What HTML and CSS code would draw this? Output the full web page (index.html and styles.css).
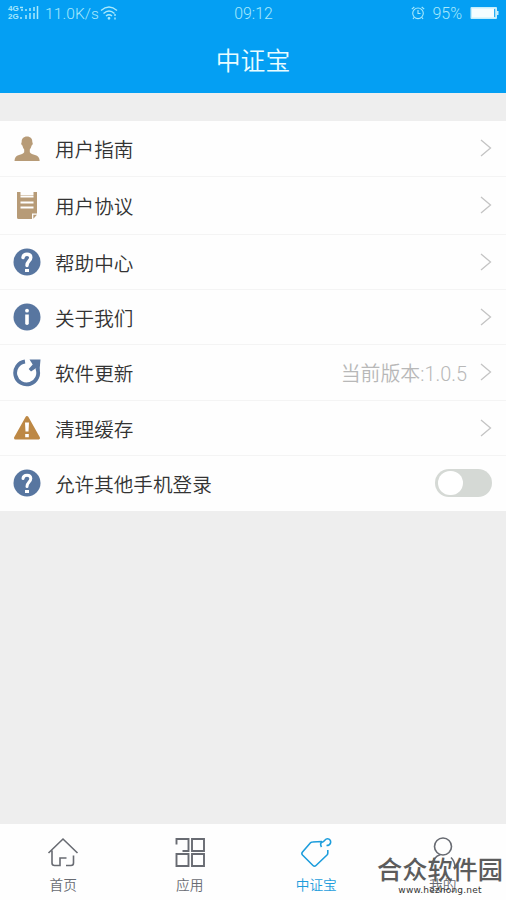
FILE: index.html
```html
<!DOCTYPE html>
<html lang="zh-CN">
<head>
<meta charset="utf-8">
<title>中证宝</title>
<link rel="stylesheet" href="styles.css">
</head>
<body>
<div class="app">
  <header class="header">
    <div class="status">
      <div class="status-left">
        <div class="network"><span>4G</span><span>2G</span></div>
        <svg class="signal" width="19" height="14" viewBox="0 0 19 14" fill="none" stroke="currentColor" stroke-width="1.500"><path d="M0 1.500h3M1 4h2M0 12h2M6 9v4M10 7v6M14 7v6M17.500 0v13M6 3v2M10 2v3M14 1v4"/></svg>
        <span class="speed">11.0K/s</span>
        <svg class="wifi" width="18" height="14" viewBox="0 0 18 14" fill="none" stroke="currentColor" stroke-width="1.400"><path d="M1 4.500Q9-2.500 17 4.500M3.500 7.500Q9 2.500 14.500 7.500M6 10Q9 7.500 12 10"/><circle cx="9" cy="12.300" r=".7" fill="currentColor"/><path d="M15 8v2M15 11.500v2"/></svg>
      </div>
      <span class="clock">09:12</span>
      <div class="status-right">
        <svg class="alarm" width="14" height="14" viewBox="0 0 14 14" fill="none" stroke="currentColor" stroke-width="1.100"><circle cx="7" cy="7.300" r="5.300"/><path d="M7 4v3.500h2.500M.8 3.200L3.300 1M13.200 3.200L10.700 1M3 11.500l-1 1.500M11 11.500l1 1.500"/></svg>
        <span class="percent">95%</span>
        <svg width="29" height="14" viewBox="0 0 29 14"><rect x=".5" y="1" width="26.500" height="12" rx="1" fill="#c5eefb"/><rect x="2" y="2.500" width="22" height="9" fill="#f5fdff"/><path d="M24.700 3v8" stroke="#069ff2"/><path d="M27 5h1.500v4H27z" fill="#c5eefb"/></svg>
      </div>
    </div>
    <h1 class="title">中证宝</h1>
  </header>

  <main class="list">
    <div class="row row-guide">
      <svg class="icon" viewBox="0 0 28 28" fill="#b79b77"><path d="M14 1.500c3.500 0 5.600 2.200 5.300 5.800 1 .8.300 2.900-.7 3.300-.4 2-1.200 3.200-1.800 4v2.700c1 1.500 3 2 5.200 2.700 3 .9 4.500 2.400 4.700 6H1.500c.2-3.600 1.500-5.100 4.500-6 2.200-.7 4.200-1.200 5.200-2.700v-2.700c-.6-.8-1.400-2-1.800-4-1-.4-1.700-2.500-.7-3.300C8.400 3.700 10.500 1.500 14 1.500z"/></svg>
      <span class="label">用户指南</span>
      <svg class="chevron" viewBox="0 0 12 18"><path d="M1 1l9.500 8L1 17"/></svg>
    </div>
    <div class="row row-terms">
      <svg class="icon" viewBox="0 0 28 28"><path fill="#b79b77" d="M4 0h3.500v3h13V0H24v21.500h-5V27H5.500Q4 27 4 25.500z"/><path d="M7.500 4.500h13M7.500 10.500h13M7.500 15.500h13" stroke="#fff" stroke-width="2"/><path fill="#b79b77" d="M20.300 22.700H24l-3.700 4z"/></svg>
      <span class="label">用户协议</span>
      <svg class="chevron" viewBox="0 0 12 18"><path d="M1 1l9.500 8L1 17"/></svg>
    </div>
    <div class="row">
      <svg class="icon" viewBox="0 0 28 28"><circle cx="14" cy="14" r="13.500" fill="#5876a0"/><path d="M10 9.500C10.200 7.500 12 6.200 14 6.200c2.300 0 3.800 1.200 3.800 3.200 0 3.600-3.800 3.600-3.800 8.200" fill="none" stroke="#fff" stroke-width="3.400" stroke-linecap="round"/><path d="M12 21h4v3h-4z" fill="#fff"/></svg>
      <span class="label">帮助中心</span>
      <svg class="chevron" viewBox="0 0 12 18"><path d="M1 1l9.500 8L1 17"/></svg>
    </div>
    <div class="row">
      <svg class="icon" viewBox="0 0 28 28"><circle cx="14" cy="14" r="13.500" fill="#5876a0"/><circle cx="14" cy="7.700" r="1.900" fill="#fff"/><path d="M12.200 11.500h3.600v8.700q0 1.800-1.800 1.800t-1.800-1.800z" fill="#fff"/></svg>
      <span class="label">关于我们</span>
      <svg class="chevron" viewBox="0 0 12 18"><path d="M1 1l9.500 8L1 17"/></svg>
    </div>
    <div class="row row-update">
      <svg class="icon" viewBox="0 0 28 28"><path d="M12 2.500A11.500 11.500 0 1 0 24.300 9.500" fill="none" stroke="#5876a0" stroke-width="3.800"/><path d="M16.500.5H27.500L26.500 11.500l-4-2-4.500 3-2.300-2.500 4-4.500z" fill="#5876a0"/></svg>
      <span class="label">软件更新</span>
      <span class="version">当前版本:1.0.5</span>
      <svg class="chevron" viewBox="0 0 12 18"><path d="M1 1l9.500 8L1 17"/></svg>
    </div>
    <div class="row">
      <svg class="icon" viewBox="0 0 28 28"><path d="M14 3.500L25.500 24H2.500z" fill="#bd8845" stroke="#bd8845" stroke-width="3" stroke-linejoin="round"/><path d="M12 8.500h4l-.5 9h-3zM12.200 20h3.600v3.200h-3.600z" fill="#fff"/></svg>
      <span class="label">清理缓存</span>
      <svg class="chevron" viewBox="0 0 12 18"><path d="M1 1l9.500 8L1 17"/></svg>
    </div>
    <div class="row row-switch">
      <svg class="icon" viewBox="0 0 28 28"><circle cx="14" cy="14" r="13.500" fill="#5876a0"/><path d="M10 9.500C10.200 7.500 12 6.200 14 6.200c2.300 0 3.800 1.200 3.800 3.200 0 3.600-3.800 3.600-3.800 8.200" fill="none" stroke="#fff" stroke-width="3" stroke-linecap="round"/><path d="M12 21h4v3h-4z" fill="#fff"/></svg>
      <span class="label">允许其他手机登录</span>
      <span class="switch"><span class="knob"></span></span>
    </div>
  </main>

  <nav class="tabs">
    <div class="tab">
      <svg class="tab-icon" viewBox="0 0 32 32"><path d="M1.500 17L16 3l14.500 14M5 14.500V27q0 2.500 2.500 2.500H13v-7.500h6.500M26.500 19.500V27q0 2.500-2.500 2.500h-5"/></svg>
      <span>首页</span>
    </div>
    <div class="tab">
      <svg class="tab-icon apps" viewBox="0 0 32 32"><path d="M2.500 8.500V3h12v12H8.500M18 3h12v12H18zM2.500 18h12v12h-12zM18 18h12v12H18z"/></svg>
      <span>应用</span>
    </div>
    <div class="tab active">
      <svg class="tab-icon" viewBox="0 0 32 32"><path d="M22 5.500L12.500 6q-1.200 0-2 .8L2.500 16q-1.300 1.500 0 3L13 29.500q1.500 1.500 3 0L27 19q.8-.8.800-2v-3M21.500 11C20 8.500 20.500 6.500 22.500 6S25 2.800 27.500 2.800 31 5 30.500 7 28 9.500 26.500 9.500"/></svg>
      <span>中证宝</span>
    </div>
    <div class="tab">
      <svg class="tab-icon" viewBox="0 0 32 32"><circle cx="16" cy="10.500" r="8.500"/><path d="M13.500 18.500C9 20 5.500 24 4.500 30M24 21.500q3.500 3.500 4 9"/></svg>
      <span>我的</span>
    </div>
  </nav>
  <div class="watermark"><span class="brand">合众软件园</span><span class="site">www.hezhong.net</span></div>
</div>
</body>
</html>
```
FILE: styles.css
```css
* { box-sizing: border-box; }
body {
  margin: 0;
  font-family: Roboto, "Noto Sans CJK SC", sans-serif;
  font-weight: 350;
}
svg { display: block; flex: none; }
.app {
  position: relative;
  display: flex;
  flex-direction: column;
  width: 506px;
  height: 900px;
  overflow: hidden;
  background: #eee;
}
.header {
  height: 93px;
  background: #049ff3;
  color: #e9fcff;
}
.status {
  display: grid;
  grid-template-columns: 1fr auto 1fr;
  align-items: center;
  height: 26px;
  padding: 0 7px 0 8px;
  color: #a9e9fc;
}
.status-left, .status-right { display: flex; align-items: center; }
.status-right { justify-content: flex-end; }
.network {
  display: flex;
  flex-direction: column;
  width: 12px;
  font: bold 8px/8px "Liberation Sans", sans-serif;
}
.signal { margin-right: 6px; }
.speed { width: 53px; padding-top: 1px; font-size: 15.500px; letter-spacing: .1px; }
.wifi { margin-left: 2px; }
.clock { padding-top: 1px; font-size: 15.800px; }
.alarm { margin-right: 7px; }
.percent { margin-right: 8px; font-size: 16px; }
.title {
  margin: 0;
  height: 67px;
  padding-top: 3px;
  text-align: center;
  font-size: 24.800px;
  line-height: 66px;
  font-weight: 350;
}
.list { margin-top: 28px; background: #fefefe; }
.row {
  display: flex;
  align-items: center;
  height: 55px;
  padding: 0 14px 0 13px;
  border-bottom: 1px solid #f4f4f4;
}
.row-guide { height: 56px; }
.row-terms { height: 58px; }
.row-update { height: 56px; }
.row-switch { padding-bottom: 1px; border-bottom: 0; }
.icon { width: 28px; height: 28px; margin-right: 14px; }
.label { flex: 1; padding-top: 5px; font-size: 19.600px; line-height: 28px; color: #333; }
.version { margin-right: 13px; padding-top: 5px; font-size: 19.900px; line-height: 28px; color: #b8b8b8; }
.chevron {
  width: 12px;
  height: 18px;
  margin-bottom: 1px;
  fill: none;
  stroke: #c4c4c4;
  stroke-width: 1.300;
}
.switch {
  width: 57px;
  height: 28px;
  padding: 2px 3px;
  border-radius: 14px;
  background: #d5d9d5;
}
.knob {
  display: block;
  width: 25px;
  height: 24px;
  border-radius: 12px;
  background: #fff;
}
.tabs {
  display: grid;
  grid-template-columns: repeat(4, 1fr);
  height: 76px;
  margin-top: auto;
  background: #fefefe;
}
.tab {
  display: flex;
  flex-direction: column;
  align-items: center;
  padding-top: 12px;
  color: #686b72;
  font-size: 13.700px;
  line-height: 20px;
}
.tab-icon {
  width: 32px;
  height: 32px;
  margin-bottom: 7px;
  fill: none;
  stroke: currentColor;
  stroke-width: 1.600;
}
.apps { stroke-width: 1.900; }
.active { color: #1d9ddc; }
.watermark {
  position: absolute;
  right: 3px;
  bottom: 4px;
  display: flex;
  flex-direction: column;
  align-items: center;
  width: 126px;
  color: #5c5c5c;
}
.brand { font-size: 25.200px; line-height: 27px; font-weight: 500; white-space: nowrap; }
.site { font: 9px/12px "DejaVu Sans", sans-serif; letter-spacing: .2px; color: #333; }
```
